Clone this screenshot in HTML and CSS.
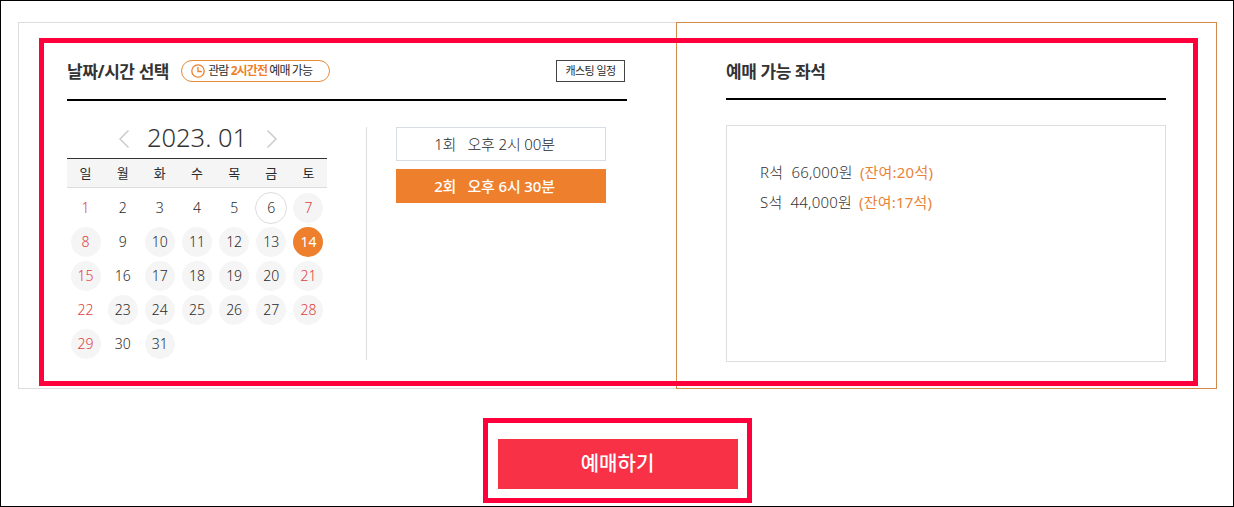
FILE: index.html
```html
<!doctype html>
<html lang="ko">
    <head>
        <meta charset="utf-8">
        <title>예매하기</title>
        <link rel="stylesheet" href="styles.css">
    </head>
    <body>
        <div class="page">

            <div class="booking">

                <div class="panel-date">
                    <div class="panel-head">
                        <h2 class="panel-title">날짜/시간 선택</h2>
                        <div class="notice">
                            <svg class="notice-icon" width="14" height="14" viewBox="0 0 14 14">
                                <circle cx="7" cy="7" r="6.200" fill="none" stroke="#ee7f2d" stroke-width="1.300"/>
                                <path d="M7 3V7.500H10.800" fill="none" stroke="#ee7f2d" stroke-width="1.300"/>
                            </svg>
                            <span class="notice-text">관람 <b>2시간전</b> 예매 가능</span>
                        </div>
                        <a class="btn-cast">캐스팅 일정</a>
                    </div>

                    <div class="panel-body">
                        <div class="calendar">
                            <div class="calendar-month">
                                <svg class="calendar-arrow" width="14" height="20" viewBox="0 0 14 20"><path d="M11.500 1.500 3 10l8.500 8.500" fill="none" stroke="#ccc" stroke-width="1.500"/></svg>
                                <span class="calendar-title">2023. 01</span>
                                <svg class="calendar-arrow" width="14" height="20" viewBox="0 0 14 20"><path d="M2.500 1.500 11 10l-8.500 8.500" fill="none" stroke="#ccc" stroke-width="1.500"/></svg>
                            </div>
                            <div class="calendar-week">
                                <span>일</span><span>월</span><span>화</span><span>수</span><span>목</span><span>금</span><span>토</span>
                            </div>
                            <div class="calendar-days">
                                <span class="day red">1</span>
                                <span class="day">2</span>
                                <span class="day">3</span>
                                <span class="day">4</span>
                                <span class="day">5</span>
                                <span class="day today">6</span>
                                <span class="day red on">7</span>

                                <span class="day red on">8</span>
                                <span class="day">9</span>
                                <span class="day on">10</span>
                                <span class="day on">11</span>
                                <span class="day on">12</span>
                                <span class="day on">13</span>
                                <span class="day selected">14</span>

                                <span class="day red on">15</span>
                                <span class="day">16</span>
                                <span class="day on">17</span>
                                <span class="day on">18</span>
                                <span class="day on">19</span>
                                <span class="day on">20</span>
                                <span class="day red on">21</span>

                                <span class="day red">22</span>
                                <span class="day on">23</span>
                                <span class="day on">24</span>
                                <span class="day on">25</span>
                                <span class="day on">26</span>
                                <span class="day on">27</span>
                                <span class="day red on">28</span>

                                <span class="day red on">29</span>
                                <span class="day">30</span>
                                <span class="day on">31</span>
                            </div>
                        </div>

                        <div class="times">
                            <a class="time">1회&nbsp;&nbsp; 오후 2시 00분</a>
                            <a class="time active">2회&nbsp;&nbsp; 오후 6시 30분</a>
                        </div>
                    </div>
                </div>

                <div class="panel-seat">
                    <div class="panel-head">
                        <h2 class="panel-title">예매 가능 좌석</h2>
                    </div>
                    <div class="seat-box">
                        <p class="seat">R석&nbsp; 66,000원 <em>(잔여:20석)</em></p>
                        <p class="seat">S석&nbsp; 44,000원 <em>(잔여:17석)</em></p>
                    </div>
                </div>

            </div>

            <div class="actions">
                <a class="btn-book">예매하기</a>
            </div>

            <!-- Red marks drawn over the capture -->
            <div class="mark mark-panel"></div>
            <div class="mark mark-button"></div>

        </div>
    </body>
</html>
```

FILE: styles.css
```css
* {
    box-sizing: border-box;
}

html,
body {
    margin: 0;
    padding: 0;
}

body {
    background: #fff;
    color: #2b2b2b;
    font-family: "Noto Sans", "Noto Sans CJK KR", sans-serif;
    font-weight: 300;
}

.page {
    position: relative;
    width: 1234px;
    height: 507px;
    padding: 21px 16px 0 17px;
    border: 1px solid #000;
    overflow: hidden;
}

.booking {
    display: flex;
    height: 367px;
}

.panel-date {
    display: flex;
    flex-direction: column;
    width: 658px;
    padding: 0 49px 0 48px;
    border: 1px solid #ddd;
    border-right: 0;
}

.panel-seat {
    width: 541px;
    padding: 0 50px 0 49px;
    border: 1px solid #d08a4a;
}

.panel-head {
    display: flex;
    align-items: center;
    height: 77px;
    padding-top: 20px;
    border-bottom: 2px solid #000;
}

.panel-date .panel-head {
    height: 78px;
    padding-bottom: 1px;
}

.panel-title {
    margin: 0;
    font-size: 17px;
    font-weight: 700;
    letter-spacing: -.4px;
    color: #333;
}

.notice {
    display: flex;
    align-items: center;
    width: 149px;
    height: 22px;
    margin-left: 12px;
    padding-left: 9px;
    border: 1px solid #e48b3c;
    border-radius: 11px;
}

.notice-icon {
    flex: none;
    margin-right: 3px;
}

.notice-text {
    font-size: 12px;
    font-weight: 400;
    letter-spacing: -.9px;
    line-height: 20px;
    white-space: nowrap;
}

.notice-text b {
    font-weight: 700;
    color: #ee7f2d;
}

.btn-cast {
    width: 69px;
    height: 22px;
    margin-left: auto;
    margin-right: 2px;
    border: 1px solid #444;
    font-size: 11px;
    font-weight: 400;
    line-height: 20px;
    letter-spacing: -.6px;
    text-align: center;
}

.panel-body {
    display: flex;
    align-items: flex-start;
    padding-top: 25px;
}

.calendar {
    width: 260px;
}

.calendar-month {
    display: flex;
    align-items: center;
    justify-content: center;
    height: 32px;
    padding-left: 2px;
}

.calendar-title {
    width: 134px;
    margin-top: -10px;
    padding-right: 2px;
    font-size: 25.500px;
    line-height: 32px;
    text-align: center;
    color: #333;
}

.calendar-arrow {
    margin-top: -6px;
}

.calendar-week {
    display: grid;
    grid-template-columns: repeat(7, 1fr);
    height: 30px;
    border-top: 1px solid #333;
    border-bottom: 1px solid #ddd;
    background: #f5f5f5;
    font-size: 13px;
    font-weight: 400;
    line-height: 28px;
    text-align: center;
}

.calendar-days {
    display: grid;
    grid-template-columns: repeat(7, 1fr);
    grid-auto-rows: 34px;
    justify-items: center;
    align-items: center;
    padding-top: 3px;
}

.day {
    width: 30px;
    height: 30px;
    border-radius: 50%;
    font-size: 14px;
    line-height: 30px;
    text-align: center;
}

.day.red {
    color: #dd4040;
}

.day.on {
    background: #f5f5f5;
}

.day.today {
    width: 32px;
    height: 32px;
    border: 1px solid #ddd;
}

.day.selected {
    background: #ee7f2d;
    color: #fff;
    font-weight: 400;
}

.times {
    width: 240px;
    height: 233px;
    margin-left: 39px;
    margin-top: 1px;
    padding-left: 29px;
    border-left: 1px solid #ddd;
}

.time {
    display: block;
    width: 210px;
    height: 34px;
    margin-bottom: 8px;
    padding-right: 13px;
    border: 1px solid #d8dde3;
    font-size: 15px;
    line-height: 32px;
    letter-spacing: -.15px;
    text-align: center;
}

.time.active {
    border-color: #ee7f2d;
    background: #ee7f2d;
    color: #fff;
    font-weight: 500;
}

.seat-box {
    height: 237px;
    margin-top: 25px;
    padding: 31px 33px;
    border: 1px solid #ddd;
}

.seat {
    margin: 0;
    font-size: 15px;
    line-height: 30px;
    letter-spacing: .2px;
    color: #333;
}

.seat em {
    margin-left: 3px;
    font-style: normal;
    font-weight: 400;
    color: #e8833a;
}

.actions {
    display: flex;
    justify-content: center;
    padding-top: 50px;
}

.btn-book {
    width: 240px;
    height: 50px;
    background: #f93146;
    color: #fff;
    font-size: 20px;
    font-weight: 500;
    line-height: 50px;
    text-align: center;
}

.mark {
    position: absolute;
    border: 5px solid #ff003c;
}

.mark-panel {
    left: 38px;
    top: 37px;
    width: 1159px;
    height: 348px;
}

.mark-button {
    left: 482px;
    top: 417px;
    width: 269px;
    height: 85px;
}
```
